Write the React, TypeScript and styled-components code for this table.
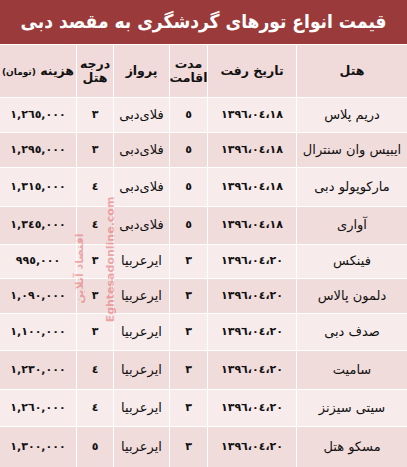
import React from "react";
import styled, { createGlobalStyle } from "styled-components";

const GlobalStyle = createGlobalStyle`
  html, body { margin: 0; padding: 0; background: #ffffff; }
  body { font-family: "DejaVu Sans", "Noto Sans", sans-serif; }
`;

const COLS = "110px 88px 37px 55px 36px 76px";

const Page = styled.div`
  position: relative;
  width: 407px;
  height: 467px;
  overflow: hidden;
  background: #ffffff;
  direction: rtl;
  display: flex;
  flex-direction: column;
  gap: 1px;
`;

const TitleBar = styled.div`
  height: 44px;
  flex: none;
  background: #9b3a3a;
  color: #ffffff;
  display: flex;
  align-items: center;
  justify-content: center;
  font-family: "DejaVu Sans Condensed", "DejaVu Sans", sans-serif;
  font-weight: bold;
  font-size: 19px;
  padding-bottom: 2px;
  box-sizing: border-box;
`;

const Row = styled.div<{ $h: number }>`
  height: ${(p) => p.$h}px;
  flex: none;
  display: grid;
  grid-template-columns: ${COLS};
  gap: 1px;
`;

const Cell = styled.div<{ $tone: "head" | "light" | "dark" }>`
  background: ${(p) =>
    p.$tone === "light" ? "#f7ebeb" : p.$tone === "head" ? "#f0dada" : "#f1dcdc"};
  display: flex;
  align-items: center;
  justify-content: center;
  text-align: center;
  color: #111111;
  font-family: "DejaVu Sans", sans-serif;
  font-size: 13px;
  line-height: 1.15;
  overflow: hidden;
  white-space: nowrap;
`;

const HeadText = styled.span`
  font-weight: bold;
  font-size: 12.5px;
  line-height: 1.1;
  white-space: normal;
`;

const Small = styled.span`
  font-size: 9px;
  font-weight: bold;
`;

const Num = styled.span<{ $spacing: number }>`
  direction: ltr;
  unicode-bidi: isolate;
  font-size: 11px;
  font-weight: bold;
  letter-spacing: ${(p) => p.$spacing}px;
`;

const Digit = styled.span`
  font-size: 11px;
  font-weight: bold;
`;

const Watermark = styled.div<{ $size: number }>`
  position: absolute;
  transform: rotate(-90deg);
  transform-origin: center center;
  color: rgba(225, 95, 95, 0.5);
  font-family: "DejaVu Sans", sans-serif;
  font-weight: bold;
  font-size: ${(p) => p.$size}px;
  white-space: nowrap;
  pointer-events: none;
`;

type Tour = {
  hotel: string;
  date: string;
  stay: string;
  airline: string;
  grade: string;
  price: string;
  h: number;
};

const tours: Tour[] = [
  { hotel: "دریم پلاس", date: "١٣٩٦،٠٤،١٨", stay: "٥", airline: "فلای‌دبی", grade: "٣", price: "١,٢٦٥,٠٠٠", h: 34 },
  { hotel: "ایبیس وان سنترال", date: "١٣٩٦،٠٤،١٨", stay: "٥", airline: "فلای‌دبی", grade: "٣", price: "١,٢٩٥,٠٠٠", h: 34 },
  { hotel: "مارکوپولو دبی", date: "١٣٩٦،٠٤،١٨", stay: "٥", airline: "فلای‌دبی", grade: "٤", price: "١,٣١٥,٠٠٠", h: 38 },
  { hotel: "آواری", date: "١٣٩٦،٠٤،١٨", stay: "٥", airline: "فلای‌دبی", grade: "٤", price: "١,٣٤٥,٠٠٠", h: 37 },
  { hotel: "فینکس", date: "١٣٩٦،٠٤،٢٠", stay: "٣", airline: "ایرعربیا", grade: "٣", price: "٩٩٥,٠٠٠", h: 33 },
  { hotel: "دلمون پالاس", date: "١٣٩٦،٠٤،٢٠", stay: "٣", airline: "ایرعربیا", grade: "٣", price: "١,٠٩٠,٠٠٠", h: 34 },
  { hotel: "صدف دبی", date: "١٣٩٦،٠٤،٢٠", stay: "٣", airline: "ایرعربیا", grade: "٣", price: "١,١٠٠,٠٠٠", h: 36 },
  { hotel: "سامیت", date: "١٣٩٦،٠٤،٢٠", stay: "٣", airline: "ایرعربیا", grade: "٤", price: "١,٢٣٠,٠٠٠", h: 38 },
  { hotel: "سیتی سیزنز", date: "١٣٩٦،٠٤،٢٠", stay: "٣", airline: "ایرعربیا", grade: "٤", price: "١,٢٦٠,٠٠٠", h: 36 },
  { hotel: "مسکو هتل", date: "١٣٩٦،٠٤،٢٠", stay: "٣", airline: "ایرعربیا", grade: "٥", price: "١,٣٠٠,٠٠٠", h: 40 },
];

export default function App() {
  return (
    <>
      <GlobalStyle />
      <Page>
        <TitleBar>قیمت انواع تورهای گردشگری به مقصد دبی</TitleBar>
        <Row $h={52}>
          <Cell $tone="head"><HeadText>هتل</HeadText></Cell>
          <Cell $tone="head"><HeadText>تاریخ رفت</HeadText></Cell>
          <Cell $tone="head"><HeadText>مدت<br />اقامت</HeadText></Cell>
          <Cell $tone="head"><HeadText>پرواز</HeadText></Cell>
          <Cell $tone="head"><HeadText>درجه<br />هتل</HeadText></Cell>
          <Cell $tone="head"><HeadText>هزینه <Small>(تومان)</Small></HeadText></Cell>
        </Row>
        {tours.map((t, i) => {
          const tone = i % 2 === 0 ? "light" : "dark";
          return (
            <Row $h={t.h} key={i}>
              <Cell $tone={tone}>{t.hotel}</Cell>
              <Cell $tone={tone}><Num $spacing={1.3}>{t.date}</Num></Cell>
              <Cell $tone={tone}><Digit>{t.stay}</Digit></Cell>
              <Cell $tone={tone}>{t.airline}</Cell>
              <Cell $tone={tone}><Digit>{t.grade}</Digit></Cell>
              <Cell $tone={tone}><Num $spacing={1}>{t.price}</Num></Cell>
            </Row>
          );
        })}
        <Watermark $size={11} style={{ left: 48, top: 253 }}>Eghtesadonline.com</Watermark>
        <Watermark $size={11} style={{ left: 44, top: 262 }}>اقتصاد آنلاین</Watermark>
      </Page>
    </>
  );
}
